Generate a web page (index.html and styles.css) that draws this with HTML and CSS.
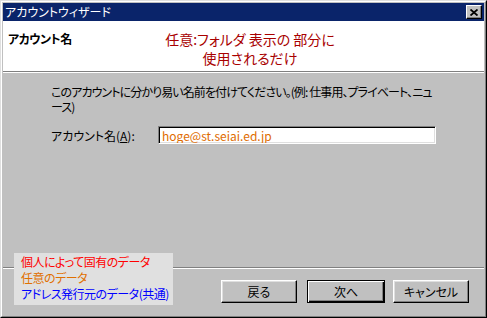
FILE: index.html
```html
<!DOCTYPE html>
<html lang="ja">
<head>
    <meta charset="UTF-8">
    <meta name="viewport" content="width=device-width, initial-scale=1.0">
    <title>アカウントウィザード</title>
<link rel="stylesheet" href="styles.css">
</head>
<body>
    <div class="window">
        <div class="frame">
            <div class="titlebar">
                <span class="title">アカウントウィザード</span>
                <div class="close">
                    <svg width="8" height="7" viewBox="0 0 8 7">
                        <path d="M0.5 0.5 L7.5 6.5 M7.5 0.5 L0.5 6.5" stroke="#000" stroke-width="1.8" fill="none"/>
                    </svg>
                </div>
            </div>

            <div class="header">
                <div class="pagename">アカウント名</div>
                <div class="note">任意:フォルダ 表示の 部分に<br>使用されるだけ</div>
            </div>

            <div class="content">
                <p class="hint">このアカウントに分かり易い名前を付けてください。(例: 仕事用、プライベート、ニュース)</p>

                <div class="field">
                    <label class="label" for="acc">アカウント名(<u>A</u>):</label>
                    <input id="acc" class="input" type="text" value="hoge@st.seiai.ed.jp">
                </div>

                <div class="footer">
                    <div class="buttons">
                        <button class="btn">戻る</button>
                        <button class="btn default">次へ</button>
                        <button class="btn">キャンセル</button>
                    </div>
                </div>

                <!-- 凡例 -->
                <div class="legend">
                    <div class="red">個人によって固有のデータ</div>
                    <div class="orange">任意のデータ</div>
                    <div class="blue">アドレス発行元のデータ(共通)</div>
                </div>
            </div>
        </div>
    </div>
</body>
</html>
```

FILE: styles.css
```css
body {
    margin: 0;
    font-family: "Noto Sans CJK JP", "Noto Sans", sans-serif;
    font-size: 12px;
    font-feature-settings: "palt";
    background-color: #c0c0c0;
}
.window {
    width: 487px;
    height: 318px;
    box-sizing: border-box;
    border: 1px solid;
    border-color: #dfdfdf #000 #000 #dfdfdf;
}
.frame {
    height: 100%;
    box-sizing: border-box;
    border: 1px solid;
    border-color: #fff #808080 #808080 #fff;
    padding: 1px;
    display: flex;
    flex-direction: column;
    background-color: #c0c0c0;
}
.titlebar {
    height: 18px;
    background-color: #0a246a;
    display: flex;
    align-items: center;
    justify-content: space-between;
    padding-left: 2px;
    padding-right: 2px;
}
.title {
    color: #fff;
    line-height: 18px;
}
.close {
    width: 16px;
    height: 14px;
    box-sizing: border-box;
    background-color: #c0c0c0;
    border: 1px solid;
    border-color: #fff #000 #000 #fff;
    box-shadow: inset -1px -1px #808080;
    display: flex;
    align-items: center;
    justify-content: center;
}
.header {
    height: 51px;
    box-sizing: border-box;
    background-color: #fff;
    border-bottom: 1px solid #808080;
    display: flex;
    padding: 9px 0 0 5px;
}
.pagename {
    width: 142px;
    font-weight: bold;
    letter-spacing: -0.5px;
    line-height: 18px;
}
.note {
    width: 200px;
    text-align: center;
    color: #a80000;
    font-size: 14px;
    line-height: 19px;
}
.content {
    flex: 1;
    position: relative;
    border-top: 1px solid #fff;
    display: flex;
    flex-direction: column;
    padding-left: 48px;
}
.hint {
    margin: 11px 0 0 0;
    width: 390px;
    line-height: 15px;
    letter-spacing: -0.9px;
    color: #000;
}
.field {
    display: flex;
    align-items: center;
    margin-top: 12px;
}
.label {
    width: 107px;
}
.input {
    width: 278px;
    height: 18px;
    box-sizing: border-box;
    border: 1px solid;
    border-color: #808080 #fff #fff #808080;
    box-shadow: inset 1px 1px #000, inset -1px -1px #dfdfdf;
    padding: 0 0 0 3px;
    font-family: "Noto Sans CJK JP", "Noto Sans", sans-serif;
    font-size: 12px;
    color: #e06c00;
    outline: none;
}
.footer {
    margin-top: auto;
    margin-left: -48px;
    border-top: 1px solid #808080;
    box-shadow: inset 0 1px #fff;
    padding: 12px 15px 12px 0;
}
.buttons {
    display: flex;
    justify-content: flex-end;
}
.btn {
    width: 76px;
    height: 23px;
    box-sizing: border-box;
    background-color: #c0c0c0;
    border: 1px solid;
    border-color: #fff #000 #000 #fff;
    box-shadow: inset -1px -1px #808080, inset 1px 1px #dfdfdf;
    font-family: "Noto Sans CJK JP", "Noto Sans", sans-serif;
    font-size: 12px;
    font-feature-settings: "palt";
    color: #000;
    padding: 0;
    margin-left: 8px;
}
.btn.default {
    width: 78px;
    outline: none;
    border: 1px solid #000;
    box-shadow: inset 1px 1px #fff, inset -1px -1px #000, inset -2px -2px #808080;
    margin-left: 10px;
}
.legend {
    position: absolute;
    left: 11px;
    top: 180px;
    width: 159px;
    height: 52px;
    box-sizing: border-box;
    background-color: #e0e0e0;
    padding: 1px 0 0 7px;
    font-size: 12px;
    line-height: 16px;
    letter-spacing: -0.5px;
    white-space: nowrap;
}
.red { color: #ff0000; }
.orange { color: #e07000; }
.blue { color: #0000ff; }
```
